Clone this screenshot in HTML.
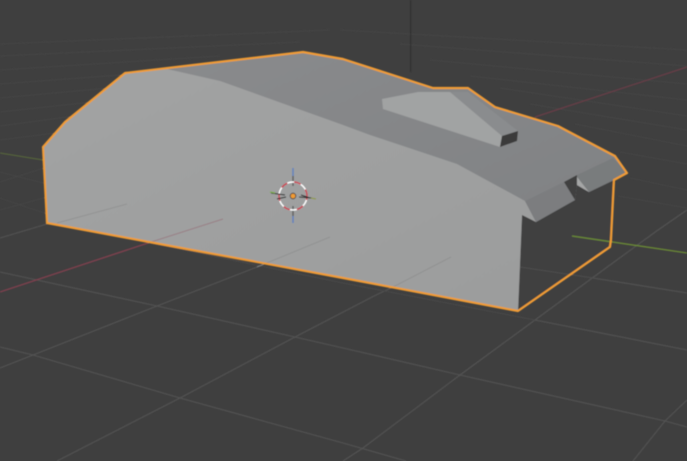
<!DOCTYPE html>
<html><head><meta charset="utf-8"><style>
html,body{margin:0;padding:0;background:#3f3f3f;width:687px;height:461px;overflow:hidden}
svg{display:block}
</style></head><body>
<svg width="687" height="461" viewBox="0 0 687 461" xmlns="http://www.w3.org/2000/svg">
<defs>
<linearGradient id="side" x1="0" y1="0" x2="1" y2="1"><stop offset="0" stop-color="#a2a3a3"/><stop offset="1" stop-color="#9c9d9d"/></linearGradient>
<linearGradient id="top" x1="0" y1="0" x2="1" y2="1"><stop offset="0" stop-color="#8b8c8e"/><stop offset="1" stop-color="#7e8082"/></linearGradient>
<filter id="s"><feGaussianBlur stdDeviation="0.5"/></filter>
</defs>
<rect width="687" height="461" fill="#3f3f3f"/>
<g filter="url(#s)">
<!-- far grid -->
<g stroke="#464646" stroke-width="0.8" fill="none">
<path d="M0 140L110 126M0 126L90 114M0 112L110 100M0 98L130 86M0 84L160 72M0 70L220 56M0 56L300 42M0 44L330 30"/>
<path d="M340 30L687 50M400 44L687 66M430 60L687 84M470 76L687 100M500 88L687 116M530 104L687 130M575 124L687 146M620 152L687 164M630 178L687 190M618 196L687 208"/>
<path d="M0 182L44 168M0 210L47 197"/>
<path d="M0 172L43 183M0 198L47 214"/>
</g>
<!-- near grid -->
<g stroke="#535353" stroke-width="1.1" fill="none">
<path d="M0 272L157 306L295 337L343 348L460 375L665 421L687 427"/>
<path d="M0 347L33 355L180 398L343 443L406 461"/>
<path d="M535 320L687 350"/>
<path d="M593 278L687 293"/>
<path d="M343 461L363 448L460 375L535 320L610 265L658 230L687 210"/>
<path d="M57 461L180 398L295 337L376 295L393 287"/>
<path d="M0 368L33 355L157 306L257 267"/>
<path d="M0 238L47 224"/>
<path d="M633 461L665 421L687 400"/>
</g>
<path d="M150 243L343 283L535 320" stroke="#484848" stroke-width="1" fill="none"/>
<!-- axes -->
<path d="M0 292L148 243" stroke="#7f3f4e" stroke-width="1.4" fill="none"/>
<path d="M535 117L687 67" stroke="#693c47" stroke-width="1.2" fill="none"/>
<path d="M0 153L43 160" stroke="#58693a" stroke-width="1.1" fill="none"/>
<path d="M410.7 0V72" stroke="#2f2f2f" stroke-width="1" fill="none"/>
<!-- car body -->
<path d="M43 147L65 122L125 73L303 52L343 59L433 88L468 88L495 107L558 126L615 156L627 173L614 180L611 240L610 247L518 311L343 278L47 223Z" fill="url(#top)"/>
<!-- right dark face -->
<path d="M522 214L536 222L575 200L577 185L589 192L614 180L611 240L610 247L518 311Z" fill="#414141"/>
<path d="M520 267L593 278" stroke="#4e4e4e" stroke-width="1" fill="none"/>
<path d="M572 236L687 253" stroke="#6a8a35" stroke-width="1.3" fill="none"/>
<!-- light side -->
<path d="M43 147L65 122L125 73L167 69L220 81L343 125L370 135L457 164L525 201L536 222L522 215L518 311L343 278L47 223Z" fill="url(#side)"/>
<!-- front wedges -->
<path d="M525 201L564 182L575 200L536 222Z" fill="#7b7d7f"/>
<path d="M564 182L577 175L577 185L575 200Z" fill="#404040"/>
<path d="M577 175L613 158L627 172L614 180L589 192L577 185Z" fill="#797b7d"/>
<path d="M577 177L589 192L577 185Z" fill="#a5a6a6"/>
<!-- scoop -->
<path d="M450 92L468 92L518 131L502 136Z" fill="#8a8c8e"/>
<path d="M382 99L418 92L450 92L502 136L500 147L383 109Z" fill="#a1a3a3"/>
<path d="M502 136L518 131L517 141L500 147Z" fill="#3b3b3b"/>
<!-- lines on car -->
<path d="M57 223L127 204" stroke="#8e8f8f" stroke-width="0.8" fill="none"/>
<path d="M148 243L223 219" stroke="#9a7f85" stroke-width="1" fill="none"/>
<path d="M257 267L330 237" stroke="#8e8f8f" stroke-width="0.8" fill="none"/>
<path d="M393 287L451 257" stroke="#8e8f8f" stroke-width="0.8" fill="none"/>
<!-- outline -->
<path d="M43 147L65 122L125 73L303 52L343 59L433 88L468 88L495 107L558 126L615 156L627 173L614 180L611 240L610 247L518 311L343 278L47 223Z" fill="none" stroke="#ef9b35" stroke-width="2.2" stroke-linejoin="round"/>
<!-- 3D cursor -->
<g fill="none">
<path d="M293 168V176" stroke="#5a7fbf" stroke-width="1.4"/>
<path d="M293 176V186M293 206V216" stroke="#5c5c5c" stroke-width="1.4"/>
<path d="M293 216V223" stroke="#5a7fbf" stroke-width="1.4"/>
<circle cx="293" cy="196" r="14" stroke="#ffffff" stroke-width="1.4"/>
<circle cx="293" cy="196" r="14" stroke="#c8414f" stroke-width="1.5" stroke-dasharray="7 7" stroke-dashoffset="3"/>
<path d="M271 193L285 195M277 199L286 197M301 195L310 198M299 197L312 198" stroke="#222" stroke-width="1"/>
<path d="M270 192L275 193" stroke="#7dae4a" stroke-width="1.4"/>
<path d="M311 198L316 199" stroke="#8f9a4a" stroke-width="1.4"/>
<circle cx="293" cy="196" r="2.8" fill="#ef9b35" stroke="#333" stroke-width="0.8"/>
</g>
</g>
</svg>
</body></html>
